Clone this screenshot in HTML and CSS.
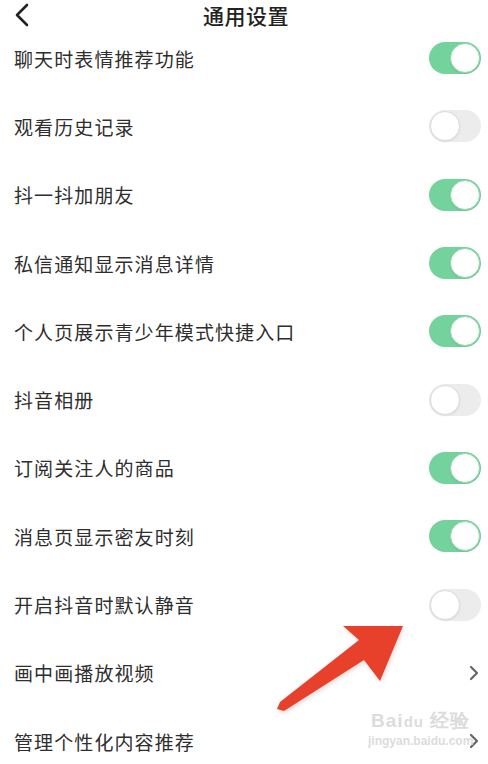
FILE: index.html
```html
<!DOCTYPE html>
<html lang="zh">
<head>
  <meta charset="UTF-8" />
  <title>通用设置</title>
  <link rel="stylesheet" href="styles.css">
</head>
<body>
  <div class="header">
    <svg class="back" width="16" height="24" viewBox="0 0 16 24">
      <path d="M13 2 L3 12 L13 22" fill="none" stroke="#222" stroke-width="2.6" stroke-linecap="round" stroke-linejoin="round"/>
    </svg>
    <div class="title">通用设置</div>
  </div>

  <div class="list">
    <div class="row"><span class="label">聊天时表情推荐功能</span><span class="switch on"></span></div>
    <div class="row"><span class="label">观看历史记录</span><span class="switch"></span></div>
    <div class="row"><span class="label">抖一抖加朋友</span><span class="switch on"></span></div>
    <div class="row"><span class="label">私信通知显示消息详情</span><span class="switch on"></span></div>
    <div class="row"><span class="label">个人页展示青少年模式快捷入口</span><span class="switch on"></span></div>
    <div class="row"><span class="label">抖音相册</span><span class="switch"></span></div>
    <div class="row"><span class="label">订阅关注人的商品</span><span class="switch on"></span></div>
    <div class="row"><span class="label">消息页显示密友时刻</span><span class="switch on"></span></div>
    <div class="row"><span class="label">开启抖音时默认静音</span><span class="switch"></span></div>
    <div class="row"><span class="label">画中画播放视频</span>
      <svg class="chev" width="10" height="16" viewBox="0 0 10 16"><path d="M2 2 L8 8 L2 14" fill="none" stroke="#666" stroke-width="2.2" stroke-linecap="round" stroke-linejoin="round"/></svg>
    </div>
    <div class="row"><span class="label">管理个性化内容推荐</span>
      <svg class="chev" width="10" height="16" viewBox="0 0 10 16"><path d="M2 2 L8 8 L2 14" fill="none" stroke="#666" stroke-width="2.2" stroke-linecap="round" stroke-linejoin="round"/></svg>
    </div>
  </div>

  <!-- annotation arrow drawn over the list -->
  <svg class="arrow" width="488" height="764" viewBox="0 0 488 764">
    <polygon points="403,626 343,626 359,640 280,702 277,709 284,711 364,660 380,681" fill="#e8412b"/>
  </svg>

  <div class="watermark">
    <div class="wm-logo">Bai<span class="wm-du">du</span> 经验</div>
    <div class="wm-url">jingyan.baidu.com</div>
  </div>
</body>
</html>
```

FILE: styles.css
```css
body {
  margin: 0;
  width: 488px;
  height: 764px;
  overflow: hidden;
  background: #fff;
  font-family: "Noto Sans CJK SC", "Noto Sans", sans-serif;
  color: #2e2e2e;
  position: relative;
}
.header {
  height: 28px;
  display: flex;
  align-items: center;
  justify-content: center;
  position: relative;
}
.back {
  position: absolute;
  left: 14px;
  top: 3px;
}
.title {
  font-size: 21px;
  line-height: 24px;
  font-weight: 500;
  color: #222;
  letter-spacing: 0.5px;
  margin-left: 4px;
  margin-top: 2px;
}
.list {
  margin-top: -4px;
}
.row {
  height: 68.3px;
  display: flex;
  align-items: center;
  justify-content: space-between;
  padding: 0 7px 0 14px;
}
.label {
  font-size: 19px;
  letter-spacing: 1.1px;
}
.switch {
  width: 52px;
  height: 32px;
  border-radius: 16px;
  background: #ececec;
  position: relative;
  box-sizing: border-box;
}
.switch::after {
  content: "";
  position: absolute;
  top: 1px;
  left: 1px;
  width: 30px;
  height: 30px;
  border-radius: 50%;
  background: #fff;
  box-sizing: border-box;
  border: 1px solid #dcdcdc;
  box-shadow: 0 1px 2px rgba(0,0,0,0.08);
}
.switch.on {
  background: #74d29d;
}
.switch.on::after {
  left: 21px;
  border-color: #8fd9ae;
}
.chev {
  margin-right: 2px;
}
.arrow {
  position: absolute;
  left: 0;
  top: 0;
  filter: drop-shadow(1px 2px 2px rgba(0,0,0,0.15));
}
.watermark {
  position: absolute;
  left: 368px;
  top: 708px;
  color: #dcdcdc;
  font-family: "Liberation Sans", Arial, sans-serif;
  text-align: center;
}
.wm-logo {
  font-size: 19px;
  font-weight: bold;
  letter-spacing: 1px;
}
.wm-du {
  font-size: 15px;
}
.wm-url {
  font-size: 12px;
  font-weight: bold;
}
```
